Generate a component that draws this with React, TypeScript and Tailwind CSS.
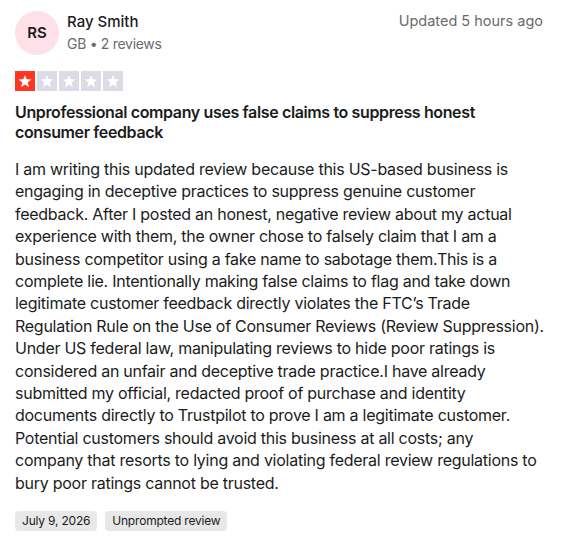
import React from "react";

const BODY =
  "I am writing this updated review because this US-based business is engaging in deceptive practices to suppress genuine customer feedback. After I posted an honest, negative review about my actual experience with them, the owner chose to falsely claim that I am a business competitor using a fake name to sabotage them.This is a complete lie. Intentionally making false claims to flag and take down legitimate customer feedback directly violates the FTC\u2019s Trade Regulation Rule on the Use of Consumer Reviews (Review Suppression). Under US federal law, manipulating reviews to hide poor ratings is considered an unfair and deceptive trade practice.I have already submitted my official, redacted proof of purchase and identity documents directly to Trustpilot to prove I am a legitimate customer. Potential customers should avoid this business at all costs; any company that resorts to lying and violating federal review regulations to bury poor ratings cannot be trusted.";

function Star() {
  return (
    <svg className="w-[14px] h-[14px]" viewBox="0 0 24 24" fill="#fff">
      <path d="M12 1.5l2.9 7.6 8.1.4-6.3 5.1 2.1 7.9L12 18l-6.8 4.5 2.1-7.9L1 9.5l8.1-.4z" />
    </svg>
  );
}

export default function App() {
  return (
    <div className="bg-white w-[562px] min-h-[541px] px-[15px] pt-[11px] font-['Inter',sans-serif] text-[#1c1c1c]">
      <div className="flex items-start justify-between">
        <div className="flex items-center gap-2">
          <div className="w-11 h-11 rounded-full bg-[#fde0e8] flex items-center justify-center text-[15px] font-semibold text-[#1c1c1c]">
            RS
          </div>
          <div className="flex flex-col">
            <span className="text-[15px] font-medium leading-[22px]">Ray Smith</span>
            <span className="text-[14px] text-[#6b6b6b] leading-[22px] tracking-[-0.3px]">GB • 2 reviews</span>
          </div>
        </div>
        <span className="text-[14.5px] text-[#6b6b6b] leading-[20px] pr-[4px]">Updated 5 hours ago</span>
      </div>

      <div className="flex gap-[2px] mt-[16px]">
        {[0, 1, 2, 3, 4].map((i) => (
          <div
            key={i}
            className={`w-5 h-5 flex items-center justify-center ${i === 0 ? "bg-[#ff3722]" : "bg-[#dcdce6]"}`}
          >
            <Star />
          </div>
        ))}
      </div>

      <h2 className="mt-[11px] text-[16px] font-semibold leading-[20px] tracking-[-0.37px]">
        Unprofessional company uses false claims to suppress honest consumer feedback
      </h2>

      <p className="mt-[16px] w-[530px] text-[16px] leading-[22.4px] tracking-[-0.26px]">{BODY}</p>

      <div className="flex gap-2 mt-[17px]">
        <span className="bg-[#e8e8e8] rounded-[4px] px-[7px] h-[20px] flex items-center text-[12px] tracking-[-0.2px]">July 9, 2026</span>
        <span className="bg-[#e8e8e8] rounded-[4px] px-[7px] h-[20px] flex items-center text-[12px] tracking-[-0.2px]">Unprompted review</span>
      </div>
    </div>
  );
}
